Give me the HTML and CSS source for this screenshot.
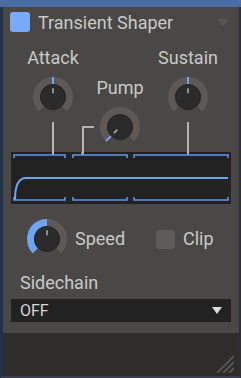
FILE: index.html
```html
<!DOCTYPE html>
<html lang="en">
<head>
  <meta charset="UTF-8">
  <title>Transient Shaper</title>
  <link rel="stylesheet" href="styles.css">
</head>
<body>
<div class="window">
  <div class="strip"></div>
  <div class="panel">
    <header class="head">
      <span class="enable"></span>
      <span class="title">Transient Shaper</span>
      <span class="collapse"></span>
    </header>

    <section class="knobs">
      <div class="col">
        <div class="label">Attack</div>
        <svg class="knob" width="44" height="44" viewBox="0 0 44 44">
          <path class="ring" d="M10.33 33.67 A16.5 16.5 0 1 1 33.67 33.67"/>
          <circle class="cap" cx="22" cy="22" r="12.5"/>
          <line class="mark" x1="22" y1="2" x2="22" y2="9"/>
          <line class="tick" x1="22" y1="13.3" x2="22" y2="18.3"/>
        </svg>
        <div class="wire"></div>
      </div>
      <div class="col pump">
        <div class="label">Pump</div>
        <svg class="knob" width="44" height="44" viewBox="0 0 44 44">
          <path class="ring" d="M10.33 33.67 A16.5 16.5 0 1 1 33.67 33.67"/>
          <circle class="cap" cx="22" cy="22" r="12.5"/>
          <g transform="rotate(-135 22 22)">
            <line class="mark" x1="22" y1="2" x2="22" y2="9"/>
            <line class="tick" x1="22" y1="13.3" x2="22" y2="18.3"/>
          </g>
        </svg>
      </div>
      <div class="col">
        <div class="label">Sustain</div>
        <svg class="knob" width="44" height="44" viewBox="0 0 44 44">
          <path class="ring" d="M10.33 33.67 A16.5 16.5 0 1 1 33.67 33.67"/>
          <circle class="cap" cx="22" cy="22" r="12.5"/>
          <line class="mark" x1="22" y1="2" x2="22" y2="9"/>
          <line class="tick" x1="22" y1="13.3" x2="22" y2="18.3"/>
        </svg>
        <div class="wire"></div>
      </div>
    </section>

    <div class="display">
      <svg width="220" height="52" viewBox="0 0 220 52">
        <g class="stub">
          <line x1="42" y1="0" x2="42" y2="3"/>
          <line x1="71.3" y1="0" x2="71.3" y2="3"/>
          <line x1="177" y1="0" x2="177" y2="3"/>
        </g>
        <g class="bracket">
          <path d="M3 6 V3 H54 V6"/>
          <path d="M62 6 V3 H116 V6"/>
          <path d="M123 6 V3 H217 V6"/>
          <path d="M3 45 V48 H54 V45"/>
          <path d="M62 45 V48 H116 V45"/>
          <path d="M123 45 V48 H217 V45"/>
        </g>
        <path class="env" d="M4 48 C4 36 7 26 15 26 H217"/>
      </svg>
    </div>

    <div class="controls">
      <div class="speed">
        <svg class="knob" width="44" height="44" viewBox="0 0 44 44">
          <path class="ring" d="M10.33 33.67 A16.5 16.5 0 1 1 33.67 33.67"/>
          <path class="fill" d="M10.33 33.67 A16.5 16.5 0 0 1 22 5.5"/>
          <circle class="cap" cx="22" cy="22" r="12.5"/>
          <line class="tick" x1="22" y1="13.3" x2="22" y2="18.3"/>
        </svg>
        <span class="label">Speed</span>
      </div>
      <div class="clip">
        <span class="check"></span>
        <span class="label">Clip</span>
      </div>
    </div>

    <div class="label sidechain">Sidechain</div>
    <div class="select">
      <span>OFF</span>
      <span class="arrow"></span>
    </div>

    <footer class="foot">
      <svg width="18" height="18" viewBox="0 0 18 18">
        <g class="grip">
          <line x1="1" y1="18" x2="18" y2="1"/>
          <line x1="7" y1="18" x2="18" y2="7"/>
          <line x1="13" y1="18" x2="18" y2="13"/>
        </g>
      </svg>
    </footer>
  </div>
</div>
</body>
</html>
```

FILE: styles.css
```css
* { box-sizing: border-box; }
html, body { margin: 0; padding: 0; }
body { font-family: Roboto, "Liberation Sans", sans-serif; background: #2b2b2b; color: #c8c8c8; }

.window { width: 241px; height: 378px; display: flex; flex-direction: column; }
.strip { height: 7px; background: #4a6da4; }
.panel { flex: 1; display: flex; flex-direction: column; background: #4a4846; border-left: 3px solid #22324a; border-right: 2px solid #2a2f38; border-bottom: 2px solid #3a404c; }

/* header row */
.head { height: 30px; display: flex; align-items: center; padding: 0 10px 0 7px; }
.enable { width: 20px; height: 20px; border-radius: 3px; background: #78aafa; }
.title { margin-left: 8px; font-size: 18px; flex: 1; }
.collapse { width: 0; height: 0; border-left: 6.5px solid transparent; border-right: 6.5px solid transparent; border-top: 7px solid #575553; }

.label { font-size: 18px; line-height: 20px; color: #c8c8c8; }

/* knobs */
.knobs { display: grid; grid-template-columns: 80px 54px 82px; padding: 11px 0 0 10px; }
.col { display: flex; flex-direction: column; align-items: center; }
.col .knob { margin-top: 7px; }
.pump { padding-top: 30px; }
.wire { width: 2px; height: 30px; margin-top: 3px; background: #b4b4b4; }

.knob .ring { fill: none; stroke: #5c5956; stroke-width: 7; }
.knob .fill { fill: none; stroke: #6ea4f4; stroke-width: 7; }
.knob .cap { fill: #2b2b2b; stroke: #232323; stroke-width: 1; }
.knob .mark { stroke: #6ea4f4; stroke-width: 2; }
.knob .tick { stroke: #a9a9a9; stroke-width: 1.6; }

/* envelope display */
.display { position: relative; height: 52px; margin: 0 8px; background: #222; }
.display svg { display: block; }
.display::before { content: ""; position: absolute; left: 71px; top: -26px; width: 10px; height: 26px; border-left: 2px solid #b4b4b4; border-top: 2px solid #b4b4b4; }
.stub line { stroke: #b4b4b4; stroke-width: 2; }
.bracket path { fill: none; stroke: #5f97e8; stroke-width: 1.6; }
.env { fill: none; stroke: #6ea4f4; stroke-width: 2; }

/* speed / clip */
.controls { display: flex; align-items: center; margin-top: 13px; padding-left: 22px; }
.speed { width: 131px; display: flex; align-items: center; gap: 6px; }
.clip { display: flex; align-items: center; gap: 8px; }
.check { width: 19px; height: 19px; border-radius: 3px; background: #5d5c5a; }

/* sidechain */
.sidechain { margin-top: 12px; padding-left: 17px; }
.select { height: 23px; margin: 6px 8px 0; padding: 0 9px; display: flex; align-items: center; justify-content: space-between; background: #222; font-size: 16px; color: #d6d6d6; }
.arrow { width: 0; height: 0; border-left: 5.5px solid transparent; border-right: 5.5px solid transparent; border-top: 7px solid #dcdcdc; }

.foot { flex: 1; margin-top: 11px; background: #2e2d2c; display: flex; justify-content: flex-end; align-items: flex-end; padding: 0 5px 3px 0; }
.foot svg { display: block; }
.grip line { stroke: #555; stroke-width: 2; }
```
